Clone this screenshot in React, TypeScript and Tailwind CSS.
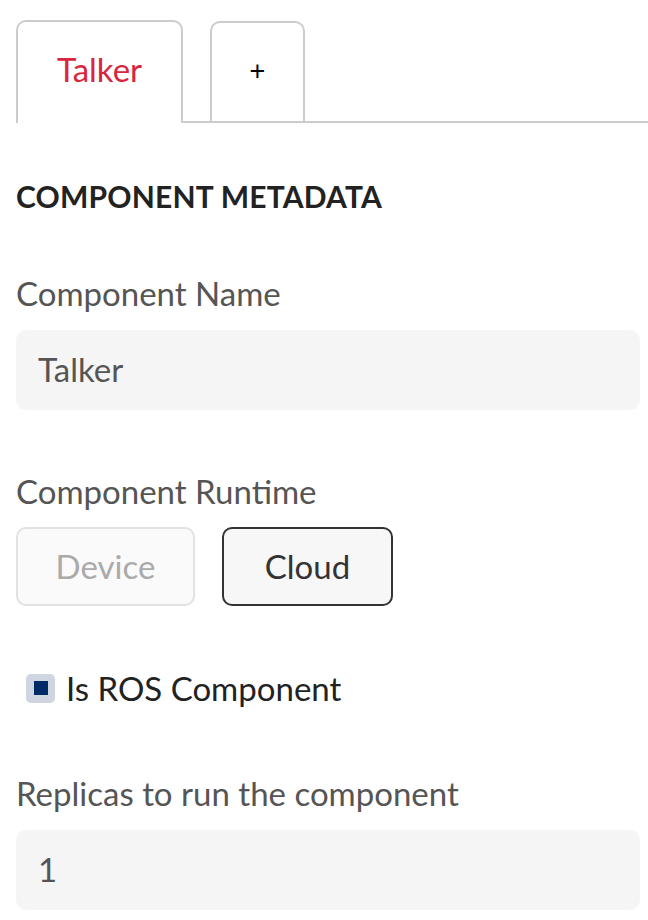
import React from "react";

function Label({ children }: { children: React.ReactNode }) {
  return <div className="text-[33px] leading-[36px] text-[#555555]">{children}</div>;
}

function Field({ value }: { value: string }) {
  return (
    <div className="mt-[19px] flex h-[80px] items-center rounded-[10px] bg-[#f5f5f5] px-[22px] text-[33px] text-[#555555]">
      {value}
    </div>
  );
}

export default function App() {
  return (
    <div className="min-h-screen bg-white pl-4 pr-2 pt-5 font-['Lato',sans-serif]">
      {/* tabs */}
      <div className="-mr-2 flex items-end">
        <div className="flex h-[103px] w-[167px] items-center justify-center rounded-t-[10px] border-2 border-b-0 border-[#cccccc] pb-[6px] text-[33px] text-[#d7263d]">
          Talker
        </div>
        <div className="w-[27px] border-b-2 border-[#cccccc]" />
        <div className="flex h-[102px] w-[95px] items-center justify-center rounded-t-[10px] border-2 border-[#cccccc] pb-[2px] font-['Liberation_Sans',sans-serif] text-[27px] text-black">
          +
        </div>
        <div className="flex-1 border-b-2 border-[#cccccc]" />
      </div>

      <h2 className="mt-[55px] text-[30px] font-bold leading-[36px] tracking-[0.2px] text-[#222222]">COMPONENT METADATA</h2>

      <div className="mt-[61px]">
        <Label>Component Name</Label>
        <Field value="Talker" />
      </div>

      <div className="mt-[63px]">
        <Label>Component Runtime</Label>
        <div className="mt-[18px] flex gap-[27px]">
          <button className="flex h-[79px] w-[179px] items-center justify-center rounded-[10px] border-2 border-[#e2e2e2] bg-[#fafafa] text-[33px] text-[#aaaaaa]">
            Device
          </button>
          <button className="flex h-[79px] w-[171px] items-center justify-center rounded-[10px] border-2 border-[#333333] bg-[#f7f7f7] text-[33px] text-[#333333]">
            Cloud
          </button>
        </div>
      </div>

      <label className="mt-[64px] flex items-center gap-[11px] pl-[10px]">
        <span className="flex h-[29px] w-[29px] items-center justify-center rounded-[5px] bg-[#cfd5e1]">
          <span className="h-[14px] w-[14px] bg-[#012a68]" />
        </span>
        <span className="text-[33px] leading-[36px] text-[#222222]">Is ROS Component</span>
      </label>

      <div className="mt-[69px]">
        <Label>Replicas to run the component</Label>
        <Field value="1" />
      </div>
    </div>
  );
}
